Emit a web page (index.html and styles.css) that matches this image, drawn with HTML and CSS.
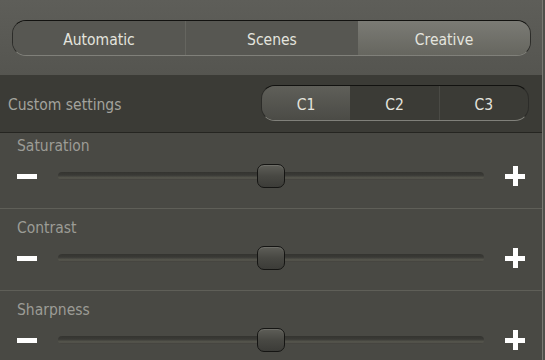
FILE: index.html
```html
<!DOCTYPE html>
<html>
<head>
<meta charset="utf-8">
<link rel="stylesheet" href="styles.css">
</head>
<body>
<div class="app">
  <div class="main">
    <div class="top">
      <div class="seg seg-top">
        <div class="seg-item">Automatic</div>
        <div class="seg-item">Scenes</div>
        <div class="seg-item selected">Creative</div>
      </div>
    </div>
    <div class="custom-row">
      <div class="custom-label">Custom settings</div>
      <div class="seg seg-c">
        <div class="seg-item selected">C1</div>
        <div class="seg-item">C2</div>
        <div class="seg-item">C3</div>
      </div>
    </div>
    <div class="section">
      <div class="label">Saturation</div>
      <div class="slider-row">
        <svg class="minus" width="20" height="5" viewBox="0 0 20 5"><rect x="0" y="0" width="20" height="5" fill="#fff"/></svg>
        <div class="track"><div class="thumb" style="left: calc(50% - 14px)"></div></div>
        <svg class="plus" width="20" height="20" viewBox="0 0 20 20"><rect x="0" y="8" width="20" height="5" fill="#fff"/><rect x="8" y="0" width="5" height="20" fill="#fff"/></svg>
      </div>
    </div>
    <div class="section">
      <div class="label">Contrast</div>
      <div class="slider-row">
        <svg class="minus" width="20" height="5" viewBox="0 0 20 5"><rect x="0" y="0" width="20" height="5" fill="#fff"/></svg>
        <div class="track"><div class="thumb" style="left: calc(50% - 14px)"></div></div>
        <svg class="plus" width="20" height="20" viewBox="0 0 20 20"><rect x="0" y="8" width="20" height="5" fill="#fff"/><rect x="8" y="0" width="5" height="20" fill="#fff"/></svg>
      </div>
    </div>
    <div class="section">
      <div class="label">Sharpness</div>
      <div class="slider-row">
        <svg class="minus" width="20" height="5" viewBox="0 0 20 5"><rect x="0" y="0" width="20" height="5" fill="#fff"/></svg>
        <div class="track"><div class="thumb" style="left: calc(50% - 14px)"></div></div>
        <svg class="plus" width="20" height="20" viewBox="0 0 20 20"><rect x="0" y="8" width="20" height="5" fill="#fff"/><rect x="8" y="0" width="5" height="20" fill="#fff"/></svg>
      </div>
    </div>
  </div>
  <div class="scrollbar"></div>
</div>
</body>
</html>
```

FILE: styles.css
```css
* { box-sizing: border-box; }
html, body {
  margin: 0;
  padding: 0;
  width: 545px;
  height: 360px;
  overflow: hidden;
  background: #494944;
  font-family: "DejaVu Sans Condensed", "DejaVu Sans", sans-serif;
  font-stretch: condensed;
}
.app {
  display: flex;
  width: 545px;
  height: 360px;
}
.main {
  width: 542px;
  display: flex;
  flex-direction: column;
  background: #494944;
}
.main > * { flex: none; }
.scrollbar {
  width: 3px;
  border-left: 1px solid #7a7a73;
  background: #4f4f4a;
}
.top {
  height: 75px;
  padding: 20px 11px 0 12px;
  background: linear-gradient(#5e5e59, #555550);
}
.seg {
  display: flex;
  height: 36px;
  border-radius: 14px;
  border: 1px solid #2c2c29;
  border-top-color: #121210;
  border-bottom-color: #80807a;
  overflow: hidden;
}
.seg-item {
  flex: 1;
  display: flex;
  align-items: center;
  justify-content: center;
  padding-top: 3px;
  font-size: 15.5px;
  color: #e4e4de;
}
.seg-top .seg-item { background: #575752; }
.seg-top .seg-item + .seg-item { border-left: 1px solid #65655f; }
.seg-top .seg-item.selected {
  background: linear-gradient(#7b7b75, #66665f);
  border-left: none;
}
.custom-row {
  height: 58px;
  display: flex;
  align-items: center;
  justify-content: space-between;
  padding: 0 13px 1px 8px;
  background: #3b3b36;
  border-bottom: 1px solid #252521;
}
.custom-label {
  padding-top: 3px;
  font-size: 15.5px;
  color: #a3a39d;
}
.seg-c {
  width: 268px;
  background: #3b3b36;
}
.seg-c .seg-item + .seg-item { border-left: 1px solid #4a4a45; }
.seg-c .seg-item.selected {
  background: linear-gradient(#5f5f59, #4b4b46);
}
.seg-c .seg-item.selected + .seg-item { border-left: none; }
.section {
  padding: 8px 17px 19px 17px;
  border-bottom: 1px solid #5f5f58;
}
.section:nth-child(3) { padding-top: 2px; }
.label {
  height: 20px;
  line-height: 20px;
  padding-top: 1px;
  font-size: 15.5px;
  color: #9c9c96;
}
.slider-row {
  margin-top: 8px;
  height: 26px;
  display: flex;
  align-items: center;
  gap: 21px;
}
.minus, .plus { flex: none; display: block; }
.track {
  position: relative;
  flex: 1;
  height: 8px;
  border-radius: 4px;
  background: linear-gradient(#343430, #3a3a36 40%, #58584f 75%, #403f3b);
}
.thumb {
  position: absolute;
  top: -8px;
  width: 28px;
  height: 24px;
  border-radius: 7px;
  border: 1px solid #151513;
  background: linear-gradient(#5e5e58, #484843 50%, #3c3c38);
  box-shadow: inset 0 1px 0 #6e6e68;
}
```
